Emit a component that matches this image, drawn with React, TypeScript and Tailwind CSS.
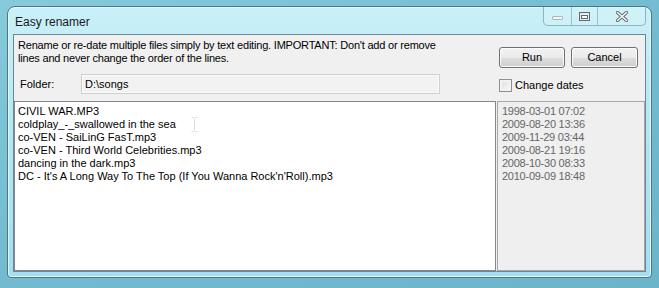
import React from 'react';

const files = [
    'CIVIL WAR.MP3',
    'coldplay_-_swallowed in the sea',
    'co-VEN - SaiLinG FasT.mp3',
    'co-VEN - Third World Celebrities.mp3',
    'dancing in the dark.mp3',
    "DC - It's A Long Way To The Top (If You Wanna Rock'n'Roll).mp3",
];

const dates = [
    '1998-03-01 07:02',
    '2009-08-20 13:36',
    '2009-11-29 03:44',
    '2009-08-21 19:16',
    '2008-10-30 08:33',
    '2010-09-09 18:48',
];

function WinButton({ label, width }: { label: string; width: string }) {
    return (
        <div
            className={`${width} h-[21px] flex items-center justify-center rounded-[3px] border border-[#707070] bg-[linear-gradient(#f2f2f2_0%,#ebebeb_50%,#dddddd_51%,#cfcfcf_100%)] shadow-[inset_0_0_0_1px_#fcfcfc]`}
        >
            {label}
        </div>
    );
}

function TitleButtons() {
    return (
        <div className="flex h-[19px] mr-[5px] rounded-b-[5px] border border-t-0 border-[#8fb3bf] bg-[#d3f1f8]/60 overflow-hidden">
            {/* minimize */}
            <div className="w-[28px] flex items-center justify-center border-r border-[#9cc0cb]">
                <div className="w-[11px] h-[4px] mt-[4px] rounded-[1px] border border-[#a9b9c0] bg-[#f4f8f9]" />
            </div>
            {/* maximize */}
            <div className="w-[26px] flex items-center justify-center border-r border-[#9cc0cb]">
                <div className="w-[11px] h-[9px] border border-[#5d6a70] bg-[#e9eef0] flex items-center justify-center">
                    <div className="w-[7px] h-[4px] mt-[1px] border border-[#5d6a70] bg-white" />
                </div>
            </div>
            {/* close */}
            <div className="w-[47px] flex items-center justify-center">
                <svg width="12" height="11" viewBox="0 0 12 11">
                    <path d="M1.5 1.5 L10.5 9.5 M10.5 1.5 L1.5 9.5" stroke="#5f6b70" strokeWidth="3.4" strokeLinecap="round" />
                    <path d="M1.5 1.5 L10.5 9.5 M10.5 1.5 L1.5 9.5" stroke="#f5f7f8" strokeWidth="1.6" strokeLinecap="round" />
                </svg>
            </div>
        </div>
    );
}

export default function App() {
    return (
        <div
            className="w-[659px] h-[288px] pt-[6px] pl-[7px] bg-[linear-gradient(160deg,#86cadb_0%,#72bbd0_50%,#6cb4c9_100%)] overflow-hidden"
            style={{ fontFamily: '"Liberation Sans", Arial, sans-serif' }}
        >
            <div className="w-[645px] h-[272px] flex flex-col rounded-t-[8px] rounded-b-[4px] border border-[#4f7686] bg-[linear-gradient(#c9f0f8_0%,#b6e8f6_40%,#a2def6_100%)] shadow-[inset_0_0_0_1px_#e4f8fc]">
                {/* Title bar */}
                <div className="h-[27px] flex justify-between items-start">
                    <div className="pl-[7px] pt-[8px] text-[12px] leading-[15px] text-[#1a1a1a]">Easy renamer</div>
                    <TitleButtons />
                </div>

                {/* Client area */}
                <div className="mx-[5px] h-[238px] flex flex-col border border-[#6f8691] bg-[#f0f0f0] text-[11px] leading-[13px] text-black">
                    {/* Top section */}
                    <div className="h-[66px] flex justify-between">
                        <div className="pl-[4px] pt-[4px]">
                            <div className="tracking-[-0.2px]">
                                Rename or re-date multiple files simply by text editing. IMPORTANT: Don't add or remove
                                <br />
                                lines and never change the order of the lines.
                            </div>
                            <div className="mt-[9px] flex items-center">
                                <div className="w-[63px] pl-[2px]">Folder:</div>
                                <div className="w-[359px] h-[20px] flex items-center pl-[3px] border border-[#cfcfcf] bg-[#f2f2f2] shadow-[inset_0_0_0_1px_#fbfbfb]">
                                    D:\songs
                                </div>
                            </div>
                        </div>
                        <div className="pr-[7px] pt-[12px] flex flex-col">
                            <div className="flex gap-[6px]">
                                <WinButton label="Run" width="w-[66px]" />
                                <WinButton label="Cancel" width="w-[67px]" />
                            </div>
                            <div className="mt-[11px] flex items-center gap-[3px]">
                                <div className="w-[13px] h-[13px] border border-[#8e8f8f] bg-[linear-gradient(135deg,#dcdcdc,#fbfbfb)] shadow-[inset_0_0_0_2px_#f2f2f2]" />
                                <span>Change dates</span>
                            </div>
                        </div>
                    </div>

                    {/* Bottom section */}
                    <div className="flex-1 flex gap-[1px]">
                        <div className="relative w-[482px] border border-[#828790] bg-white pl-[3px] pt-[3px]">
                            {files.map((f) => (
                                <div key={f} className="whitespace-nowrap">{f}</div>
                            ))}
                            <svg className="absolute left-[176px] top-[15px]" width="7" height="15" viewBox="0 0 7 15">
                                <path d="M0.5 0.5 H2.5 L3.5 1.5 L4.5 0.5 H6.5 M3.5 1.5 V13.5 M0.5 14.5 H2.5 L3.5 13.5 L4.5 14.5 H6.5" stroke="#dcdcdc" fill="none" />
                            </svg>
                        </div>
                        <div className="flex-1 border border-[#a7a7a7] bg-[#efefef] pl-[4px] pt-[3px] text-[#666666] tracking-[-0.25px]">
                            {dates.map((d, i) => (
                                <div key={i}>{d}</div>
                            ))}
                        </div>
                    </div>
                </div>
            </div>
        </div>
    );
}
